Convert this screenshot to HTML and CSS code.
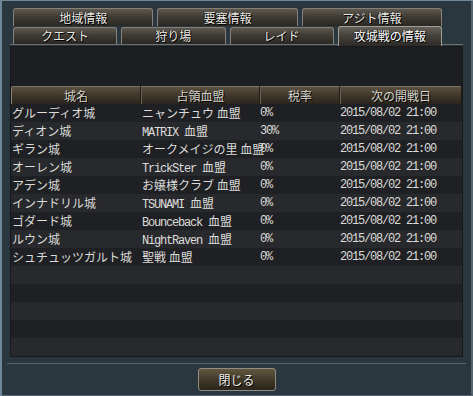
FILE: index.html
```html
<!DOCTYPE html>
<html lang="ja">
<head>
    <meta charset="UTF-8" />
    <title>攻城戦の情報</title>
    <link rel="stylesheet" href="styles.css">
</head>
<body>

<div class="window">

    <!-- タブ -->
    <div class="tabs">
        <div class="tab-row">
            <div class="tab">地域情報</div>
            <div class="tab">要塞情報</div>
            <div class="tab">アジト情報</div>
        </div>
        <div class="tab-row lower">
            <div class="tab">クエスト</div>
            <div class="tab">狩り場</div>
            <div class="tab">レイド</div>
            <div class="tab active">攻城戦の情報</div>
        </div>
    </div>

    <!-- 攻城戦リスト -->
    <div class="panel">
        <div class="panel-top"></div>
        <table class="siege">
            <colgroup>
                <col class="c-name">
                <col class="c-clan">
                <col class="c-tax">
                <col class="c-date">
            </colgroup>
            <thead>
                <tr>
                    <th>城名</th>
                    <th>占領血盟</th>
                    <th>税率</th>
                    <th>次の開戦日</th>
                </tr>
            </thead>
            <tbody>
                <tr>
                    <td>グルーディオ城</td>
                    <td>ニャンチュウ 血盟</td>
                    <td class="mono">0%</td>
                    <td class="mono">2015/08/02 21:00</td>
                </tr>
                <tr>
                    <td>ディオン城</td>
                    <td><span class="mono">MATRIX </span>血盟</td>
                    <td class="mono">30%</td>
                    <td class="mono">2015/08/02 21:00</td>
                </tr>
                <tr>
                    <td>ギラン城</td>
                    <td>オークメイジの里 血盟</td>
                    <td class="mono">0%</td>
                    <td class="mono">2015/08/02 21:00</td>
                </tr>
                <tr>
                    <td>オーレン城</td>
                    <td><span class="mono">TrickSter </span>血盟</td>
                    <td class="mono">0%</td>
                    <td class="mono">2015/08/02 21:00</td>
                </tr>
                <tr>
                    <td>アデン城</td>
                    <td>お嬢様クラブ 血盟</td>
                    <td class="mono">0%</td>
                    <td class="mono">2015/08/02 21:00</td>
                </tr>
                <tr>
                    <td>インナドリル城</td>
                    <td><span class="mono">TSUNAMI </span>血盟</td>
                    <td class="mono">0%</td>
                    <td class="mono">2015/08/02 21:00</td>
                </tr>
                <tr>
                    <td>ゴダード城</td>
                    <td><span class="mono">Bounceback </span>血盟</td>
                    <td class="mono">0%</td>
                    <td class="mono">2015/08/02 21:00</td>
                </tr>
                <tr>
                    <td>ルウン城</td>
                    <td><span class="mono">NightRaven </span>血盟</td>
                    <td class="mono">0%</td>
                    <td class="mono">2015/08/02 21:00</td>
                </tr>
                <tr>
                    <td>シュチュッツガルト城</td>
                    <td>聖戦 血盟</td>
                    <td class="mono">0%</td>
                    <td class="mono">2015/08/02 21:00</td>
                </tr>
                <tr><td></td><td></td><td></td><td></td></tr>
                <tr><td></td><td></td><td></td><td></td></tr>
                <tr><td></td><td></td><td></td><td></td></tr>
                <tr><td></td><td></td><td></td><td></td></tr>
                <tr><td></td><td></td><td></td><td></td></tr>
            </tbody>
        </table>
    </div>

    <!-- フッター -->
    <div class="footer">
        <button class="close">閉じる</button>
    </div>

</div>

</body>
</html>
```

FILE: styles.css
```css
body {
    margin: 0;
    padding: 0;
    background: #1a1f23;
    font-family: "Noto Sans CJK JP", "Noto Sans", sans-serif;
    font-size: 12px;
    color: #dcdcda;
}

.window {
    width: 473px;
    height: 396px;
    box-sizing: border-box;
    background: #2b373f;
    box-shadow: inset 2px 1px 0 #6f8798, inset -2px -1px 0 #55656f;
    overflow: hidden;
}

/* タブ */
.tabs {
    margin: 0 10px;
    padding: 8px 21px 0 3px;
    border-bottom: 1px solid #6d706f;
}

.tab-row {
    display: flex;
    gap: 4px;
    height: 18px;
    align-items: flex-start;
}

.tab-row.lower {
    margin-top: 1px;
    height: 17px;
}

.tab {
    flex: 1;
    height: 18px;
    box-sizing: border-box;
    line-height: 17px;
    text-align: center;
    color: #ecebe6;
    text-shadow: 1px 1px 0 #000, -1px 0 0 #111;
    background: linear-gradient(#5e594f, #403c35 45%, #2a2823);
    border: 1px solid #85817a;
    border-bottom: none;
    border-radius: 3px 3px 0 0;
}

.tab-row.lower .tab {
    height: 17px;
    line-height: 16px;
}

.tab-row.lower .tab.active {
    height: 20px;
    margin-top: -1px;
    line-height: 18px;
    color: #fff;
    background: linear-gradient(#66615a, #46423b 45%, #2c2a27);
    border-color: #a19e98;
}

/* パネル */
.panel {
    margin: 1px 10px 0;
    border: 1px solid #16181b;
    background: #1e1f22;
}

.panel-top {
    height: 39px;
    background: #1d1e21;
}

.siege {
    width: 451px;
    border-collapse: separate;
    border-spacing: 0;
    table-layout: fixed;
}

.c-name { width: 130px; }
.c-clan { width: 119px; }
.c-tax  { width: 80px; }
.c-date { width: 122px; }

.siege tr {
    height: 18px;
}

.siege th {
    height: 18px;
    box-sizing: border-box;
    padding: 0;
    font-weight: normal;
    color: #d6d4cc;
    text-shadow: 1px 1px 0 #000;
    background: linear-gradient(#5b5141, #3d3528 55%, #2a251d);
    border-top: 1px solid #7a7262;
    border-left: 1px solid #6a6150;
    border-right: 1px solid #1e1a14;
    line-height: 16px;
}

.siege th:first-child {
    border-left: 1px solid #8a8270;
    border-top-left-radius: 2px;
}

.siege th:last-child {
    border-top-right-radius: 2px;
}

.siege td {
    height: 18px;
    padding: 0 0 0 1px;
    line-height: 18px;
    white-space: nowrap;
    overflow: visible;
}

.siege td:nth-child(3),
.siege td:nth-child(4) {
    padding-left: 0;
}

.siege tbody tr:nth-child(odd) {
    background: #1f2023;
}

.siege tbody tr:nth-child(even) {
    background: #28292c;
}

.mono {
    font-family: "Liberation Mono", "DejaVu Sans Mono", monospace;
    font-size: 12px;
    letter-spacing: -1.2px;
}

span.mono {
    line-height: 1;
}

/* フッター */
.footer {
    margin: 6px 7px 0;
    padding-top: 4px;
    border-top: 1px solid #53636d;
    display: flex;
    justify-content: center;
}

.close {
    width: 78px;
    height: 23px;
    padding: 0;
    font-family: inherit;
    font-size: 12px;
    line-height: 20px;
    color: #efeee9;
    text-shadow: 1px 1px 0 #000;
    background: linear-gradient(#61573f, #42392a 50%, #2b251b);
    border: 1px solid #918d84;
    border-radius: 3px;
    cursor: pointer;
}
```
